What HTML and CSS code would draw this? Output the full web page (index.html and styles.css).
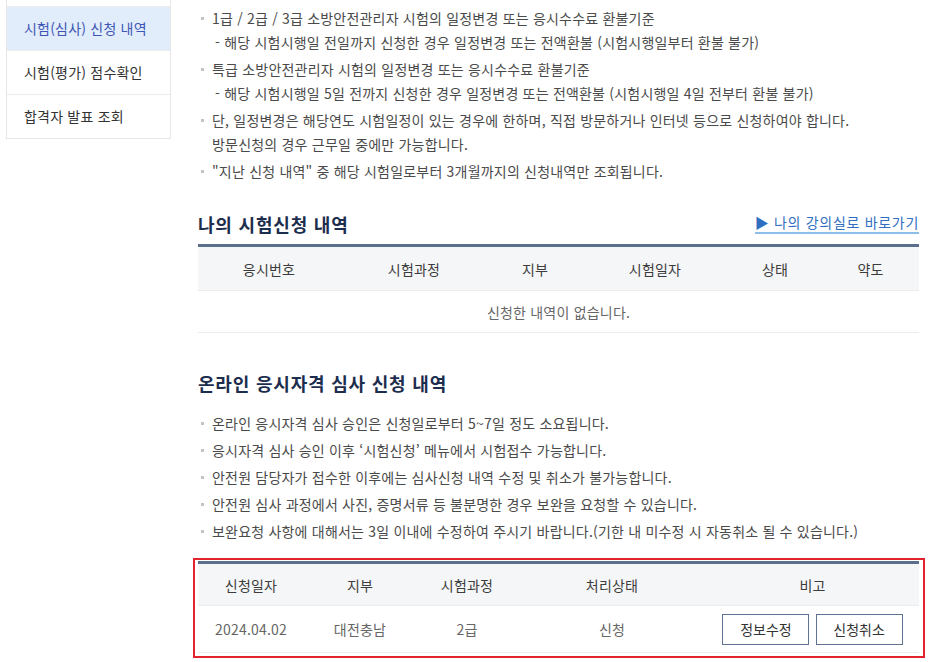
FILE: index.html
```html
<!DOCTYPE html>
<html lang="ko">
<head>
    <meta charset="UTF-8">
    <meta name="viewport" content="width=device-width, initial-scale=1.0">
    <title>시험(심사) 신청 내역</title>
    <link rel="stylesheet" href="styles.css">
</head>
<body>
    <div class="wrap">
        <!-- Left menu (page is scrolled, top item is cut off) -->
        <ul class="side">
            <li class="prev"></li>
            <li class="active">시험(심사) 신청 내역</li>
            <li>시험(평가) 점수확인</li>
            <li>합격자 발표 조회</li>
        </ul>

        <div class="content">
            <!-- Notice -->
            <ul class="notes top">
                <li>1급 / 2급 / 3급 소방안전관리자 시험의 일정변경 또는 응시수수료 환불기준
                    <span class="sub">- 해당 시험시행일 전일까지 신청한 경우 일정변경 또는 전액환불 (시험시행일부터 환불 불가)</span>
                </li>
                <li>특급 소방안전관리자 시험의 일정변경 또는 응시수수료 환불기준
                    <span class="sub">- 해당 시험시행일 5일 전까지 신청한 경우 일정변경 또는 전액환불 (시험시행일 4일 전부터 환불 불가)</span>
                </li>
                <li>단, 일정변경은 해당연도 시험일정이 있는 경우에 한하며, 직접 방문하거나 인터넷 등으로 신청하여야 합니다.<br>방문신청의 경우 근무일 중에만 가능합니다.</li>
                <li>"지난 신청 내역" 중 해당 시험일로부터 3개월까지의 신청내역만 조회됩니다.</li>
            </ul>

            <!-- My exam list -->
            <div class="title-row">
                <h2>나의 시험신청 내역</h2>
                <a href="#" class="go-link">&#9654; 나의 강의실로 바로가기</a>
            </div>
            <table class="board exam">
                <thead>
                    <tr>
                        <th>응시번호</th>
                        <th>시험과정</th>
                        <th>지부</th>
                        <th>시험일자</th>
                        <th>상태</th>
                        <th>약도</th>
                    </tr>
                </thead>
                <tbody>
                    <tr>
                        <td colspan="6" class="empty">신청한 내역이 없습니다.</td>
                    </tr>
                </tbody>
            </table>

            <!-- Online review list -->
            <div class="title-row second">
                <h2>온라인 응시자격 심사 신청 내역</h2>
            </div>
            <ul class="notes">
                <li>온라인 응시자격 심사 승인은 신청일로부터 5~7일 정도 소요됩니다.</li>
                <li>응시자격 심사 승인 이후 ‘시험신청’ 메뉴에서 시험접수 가능합니다.</li>
                <li>안전원 담당자가 접수한 이후에는 심사신청 내역 수정 및 취소가 불가능합니다.</li>
                <li>안전원 심사 과정에서 사진, 증명서류 등 불분명한 경우 보완을 요청할 수 있습니다.</li>
                <li>보완요청 사항에 대해서는 3일 이내에 수정하여 주시기 바랍니다.(기한 내 미수정 시 자동취소 될 수 있습니다.)</li>
            </ul>

            <div class="mark">
                <table class="board review">
                    <thead>
                        <tr>
                            <th>신청일자</th>
                            <th>지부</th>
                            <th>시험과정</th>
                            <th>처리상태</th>
                            <th>비고</th>
                        </tr>
                    </thead>
                    <tbody>
                        <tr>
                            <td>2024.04.02</td>
                            <td>대전충남</td>
                            <td>2급</td>
                            <td>신청</td>
                            <td>
                                <button class="btn">정보수정</button>
                                <button class="btn">신청취소</button>
                            </td>
                        </tr>
                    </tbody>
                </table>
            </div>
        </div>
    </div>
</body>
</html>
```

FILE: styles.css
```css
body {
    margin: 0;
    padding: 0;
    font-family: "Noto Sans CJK KR", "Noto Sans", sans-serif;
    font-size: 14px;
    letter-spacing: 0.2px;
    color: #555;
    background: #fff;
}
ul {
    list-style: none;
    margin: 0;
    padding: 0;
}
.wrap {
    display: flex;
    align-items: flex-start;
    padding-left: 6px;
}

/* left menu */
.side {
    width: 165px;
    flex-shrink: 0;
    border: 1px solid #e6e6e6;
    border-top: none;
    box-sizing: border-box;
}
.side li {
    height: 43px;
    line-height: 43px;
    padding-left: 17px;
    border-bottom: 1px solid #ececec;
    color: #333;
}
.side li:last-child {
    border-bottom: none;
}
.side .prev {
    height: 6px;
}
.side .active {
    background: #e1edfb;
    color: #3f55b4;
}

/* content */
.content {
    width: 721px;
    margin-left: 27px;
}
.notes.top {
    padding-top: 6px;
}
.notes li {
    position: relative;
    padding-left: 14px;
    line-height: 24px;
    margin-bottom: 3px;
    color: #4a4a4a;
}
.notes li::before {
    content: "";
    position: absolute;
    left: 3px;
    top: 11px;
    width: 3px;
    height: 3px;
    background: #c4c4c4;
}
.notes .sub {
    display: block;
    padding-left: 3px;
}

.title-row {
    display: flex;
    justify-content: space-between;
    align-items: flex-end;
    margin-top: 28px;
    margin-bottom: 7px;
}
.title-row.second {
    margin-top: 37px;
    margin-bottom: 15px;
}
h2 {
    margin: 0;
    font-size: 18px;
    font-weight: bold;
    letter-spacing: 0.8px;
    color: #1c2d4e;
    line-height: 26px;
}
.go-link {
    color: #2f6fc2;
    text-decoration: none;
    font-size: 14px;
    letter-spacing: 0.7px;
    line-height: 18px;
    border-bottom: 2px solid #8fbde9;
    padding-bottom: 1px;
    margin-bottom: 3px;
}

/* tables */
.board {
    width: 100%;
    border-collapse: collapse;
    border-top: 3px solid #5b6e8b;
    table-layout: fixed;
}
.board th {
    background: #f5f6f8;
    font-weight: normal;
    color: #3c3c3c;
    height: 43px;
    padding: 0;
}
.board td {
    text-align: center;
    color: #666;
    border-bottom: 1px solid #ececec;
    border-top: 1px solid #ececec;
    padding: 0;
}
.board .empty {
    height: 41px;
}
.exam th:nth-child(1) { width: 142px; }
.exam th:nth-child(2) { width: 148px; }
.exam th:nth-child(3) { width: 94px; }
.exam th:nth-child(4) { width: 146px; }
.exam th:nth-child(5) { width: 94px; }

.mark {
    margin: 15px -6px 0 -5px;
    padding: 1px 4px 3px 3px;
    border: 2px solid #e3242f;
}
.review th {
    height: 41px;
}
.review td {
    height: 46px;
}
.review th:nth-child(1) { width: 106px; }
.review th:nth-child(2) { width: 112px; }
.review th:nth-child(3) { width: 102px; }
.review th:nth-child(4) { width: 188px; }

.btn {
    width: 87px;
    height: 31px;
    margin: 0 1px;
    background: #fff;
    border: 1px solid #5f7293;
    font-family: "Noto Sans CJK KR", sans-serif;
    font-size: 14px;
    color: #333;
    cursor: pointer;
}
```
